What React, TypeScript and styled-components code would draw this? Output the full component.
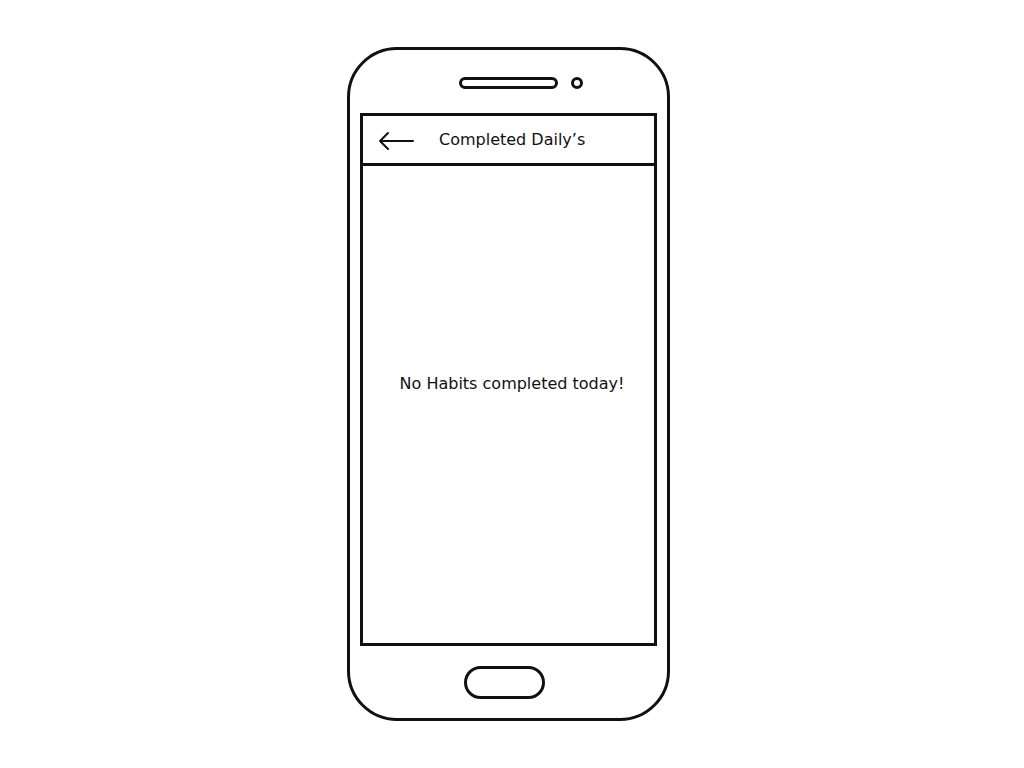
import React from 'react'
import styled, {createGlobalStyle} from 'styled-components'

const GlobalStyle = createGlobalStyle`
  html, body {
    margin: 0;
    padding: 0;
    background: #ffffff;
  }
  body {
    font-family: 'DejaVu Sans', 'Noto Sans', sans-serif;
    color: #111111;
  }
`

const Page = styled.div`
  width: 1024px;
  height: 768px;
  padding: 47px 0 0 347px;
  box-sizing: border-box;
`

const PhoneFrame = styled.div`
  width: 323px;
  height: 674px;
  box-sizing: border-box;
  border: 3px solid #111111;
  border-radius: 50px;
  display: flex;
  flex-direction: column;
  padding: 0 10px;
`

const TopBezel = styled.div`
  height: 63px;
  display: grid;
  grid-template-columns: 1fr auto 1fr;
  align-items: center;
  padding-top: 3px;
  box-sizing: border-box;
`

const Speaker = styled.div`
  grid-column: 2;
  width: 99px;
  height: 12px;
  box-sizing: border-box;
  border: 3px solid #111111;
  border-radius: 6px;
`

const Camera = styled.div`
  grid-column: 3;
  justify-self: start;
  margin-left: 13px;
  width: 12px;
  height: 12px;
  box-sizing: border-box;
  border: 3px solid #111111;
  border-radius: 50%;
`

const Screen = styled.div`
  height: 533px;
  box-sizing: border-box;
  border: 3px solid #111111;
  display: flex;
  flex-direction: column;
`

const Header = styled.div`
  height: 50px;
  box-sizing: border-box;
  border-bottom: 3px solid #111111;
  display: flex;
  align-items: center;
  padding-left: 15px;
  gap: 25px;
`

const BackIcon = styled.svg`
  width: 36px;
  height: 20px;
  flex: none;
  margin-top: 2px;
`

const Title = styled.div`
  font-size: 16px;
`

const Body = styled.div`
  flex: 1;
  display: flex;
  align-items: center;
  justify-content: center;
  padding: 0 0 42px 7px;
`

const EmptyText = styled.div`
  font-size: 16px;
`

const BottomBezel = styled.div`
  flex: 1;
  display: flex;
  align-items: center;
  justify-content: center;
`

const HomeButton = styled.div`
  width: 81px;
  height: 33px;
  box-sizing: border-box;
  border: 3px solid #111111;
  border-radius: 17px;
  margin-right: 9px;
`

function App() {
  return (
    <Page>
      <GlobalStyle />
      <PhoneFrame>
        <TopBezel>
          <Speaker />
          <Camera />
        </TopBezel>
        <Screen>
          <Header>
            <BackIcon viewBox="0 0 36 20">
              <path
                d="M2 10 H35 M2 10 L10 2 M2 10 L10 18"
                fill="none"
                stroke="#111111"
                strokeWidth="2"
                strokeLinecap="round"
              />
            </BackIcon>
            <Title>Completed Daily’s</Title>
          </Header>
          <Body>
            <EmptyText>No Habits completed today!</EmptyText>
          </Body>
        </Screen>
        <BottomBezel>
          <HomeButton />
        </BottomBezel>
      </PhoneFrame>
    </Page>
  )
}

export default App
